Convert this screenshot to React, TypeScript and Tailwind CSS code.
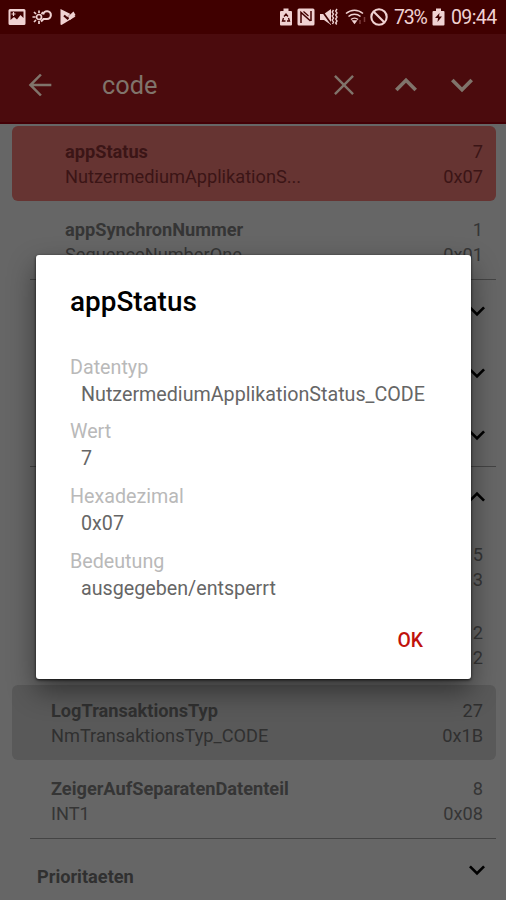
import { clsx } from "clsx";

interface Entry {
  name: string;
  type: string;
  value: string;
  hex: string;
  tone?: "match" | "current";
  nested?: boolean;
}

const TOP_ENTRIES: Entry[] = [
  { name: "appStatus", type: "NutzermediumApplikationS...", value: "7", hex: "0x07", tone: "current", nested: true },
  { name: "appSynchronNummer", type: "SequenceNumberOne", value: "1", hex: "0x01", nested: true },
];

const LOG_ENTRIES: Entry[] = [
  { name: "", type: "", value: "5", hex: "3" },
  { name: "", type: "", value: "2", hex: "2" },
  { name: "LogTransaktionsTyp", type: "NmTransaktionsTyp_CODE", value: "27", hex: "0x1B", tone: "match" },
  { name: "ZeigerAufSeparatenDatenteil", type: "INT1", value: "8", hex: "0x08" },
];

const DETAILS = [
  { label: "Datentyp", value: "NutzermediumApplikationStatus_CODE" },
  { label: "Wert", value: "7" },
  { label: "Hexadezimal", value: "0x07" },
  { label: "Bedeutung", value: "ausgegeben/entsperrt" },
];

const ICON_PATHS = {
  back: "M20 11.100H7.400l5.900-5.900L12 4l-8 8 8 8 1.300-1.200-5.900-5.900H20z",
  close: "M19 6.200 17.800 5 12 10.800 6.200 5 5 6.200 10.800 12 5 17.800 6.200 19 12 13.200 17.800 19 19 17.800 13.200 12z",
  up: "M7.410 15.410 12 10.830l4.590 4.580L18 14l-6-6-6 6z",
  down: "M7.410 8.590 12 13.170l4.590-4.580L18 10l-6 6-6-6z",
};

function Icon({ name, size, className }: { name: keyof typeof ICON_PATHS; size: number; className?: string }) {
  return (
    <svg width={size} height={size} viewBox="0 0 24 24" fill="currentColor" className={clsx("shrink-0", className)}>
      <path d={ICON_PATHS[name]} />
    </svg>
  );
}

function StatusBar() {
  return (
    <div className="flex h-[34px] items-center bg-[#400000] pr-[8px] pl-[8px] text-[#f0d2d2]">
      <svg width="18" height="18" viewBox="0 0 18 18" fill="currentColor">
        <path fillRule="evenodd" d="M2 1h14a1.500 1.500 0 0 1 1.500 1.500v13a1.500 1.500 0 0 1-1.500 1.500H2a1.500 1.500 0 0 1-1.500-1.500v-13A1.500 1.500 0 0 1 2 1ZM2.500 3.500v8.500l3.500-3 3 2.500 3.500-4.500 3 3V3.500Z" />
        <path d="M5.500 4v4M3.500 6h4" stroke="currentColor" strokeWidth="1.200" />
      </svg>
      <svg className="ml-[6px]" width="21" height="18" viewBox="0 0 21 18" fill="none" stroke="currentColor" strokeWidth="1.700">
        <circle cx="7" cy="9" r="2.500" />
        <path d="M7 2.500v2.500M7 13v3M.5 9h3M2 4l2 2M2 14l2-2M11 4l-1.500 2" />
        <path d="M9 13.500 11.500 11h3.500a3.900 3.900 0 1 0-3.900-4.500" strokeWidth="2.100" />
      </svg>
      <svg className="ml-[6px]" width="18" height="18" viewBox="0 0 18 18">
        <path d="M1.500 1 16.500 8.500 2.500 17l-1-.5Z" fill="currentColor" />
        <path d="M5 7.500 8.500 10.500 16 2.500" fill="none" stroke="#400000" strokeWidth="2.200" />
        <path d="M9 8.500 14.500 3.500 16.500 7 11 12" fill="currentColor" />
      </svg>

      <div className="ml-auto flex items-center">
        <svg width="12" height="18" viewBox="0 0 12 18">
          <path d="M3.500.5h5V3H11a1 1 0 0 1 1 1v12.500a1 1 0 0 1-1 1H1a1 1 0 0 1-1-1V4a1 1 0 0 1 1-1h2.500Z" fill="currentColor" />
          <path d="M4 8.500 6 6l2 2.500M3.500 10 2.500 13H5.500M8.500 10l1 3H7" fill="none" stroke="#400000" strokeWidth="1.300" />
        </svg>
        <svg className="ml-[5px]" width="18" height="18" viewBox="0 0 18 18">
          <rect x=".5" width="17" height="17" y=".5" rx="1.500" fill="currentColor" />
          <path d="M4 15V4.500L13.500 13M14 3v10" fill="none" stroke="#400000" strokeWidth="1.500" />
          <path d="M6.500 3.500 11.500 8" fill="none" stroke="#400000" strokeWidth="1.200" />
        </svg>
        <svg className="ml-[5px]" width="18" height="18" viewBox="0 0 18 18" fill="currentColor">
          <path d="M0 6h4l7-5v16l-7-5H0Z" />
          <path d="M1 1.500l10 14" stroke="#400000" strokeWidth="1.700" />
          <path d="M13.500 2l-1.300 2 1.300 2-1.300 2 1.300 2-1.300 2 1.300 2-1 2M17 1l-1.300 2L17 5l-1.300 2L17 9l-1.300 2 1.300 2-1.300 2 1 1.500" fill="none" stroke="currentColor" strokeWidth="1.400" />
        </svg>
        <svg className="ml-[7px]" width="22" height="18" viewBox="0 0 22 18" fill="none" stroke="currentColor" strokeWidth="1.500">
          <path d="M1 5.500c5-4.500 12-4.500 17 0M3.500 8.500c3.500-3 8.500-3 12 0M6 11.500c2-1.800 5-1.800 7 0" />
          <path d="M8 13h3l-1.500 2Z" fill="currentColor" />
          <path d="M15 12v4M19.500 9v5" stroke="#7a3a3a" />
        </svg>
        <svg className="ml-[3px]" width="18" height="18" viewBox="0 0 18 18" fill="none" stroke="currentColor" strokeWidth="2.100">
          <circle cx="9" cy="9" r="7.700" />
          <path d="M3.500 3.500l11 11" />
        </svg>
        <span className="ml-[6px] w-[33px] pt-px text-[19.500px] leading-none tracking-[-1.200px]">73%</span>
        <svg className="ml-[5px]" width="13" height="18" viewBox="0 0 12 18">
          <path d="M3.500.5h5V3H11a1 1 0 0 1 1 1v12.500a1 1 0 0 1-1 1H1a1 1 0 0 1-1-1V4a1 1 0 0 1 1-1h2.500Z" fill="currentColor" />
          <path d="M7 5 2.500 10H5.500l-.5 4 4.500-5.500h-3Z" fill="#400000" />
        </svg>
        <span className="ml-[6px] w-[47px] pt-px text-[19.500px] leading-none tracking-[-0.600px]">09:44</span>
      </div>
    </div>
  );
}

function SearchBar() {
  return (
    <header className="flex h-[90px] items-center border-b-2 border-[#430006] bg-[#4b0b0d] pt-[13px] pr-[22px] pl-[23px] text-[#80746b]">
      <Icon name="back" size={34} />
      <span className="ml-[45px] pt-[3px] text-[25.300px]">code</span>
      <div className="ml-auto flex items-center">
        <Icon name="close" size={34} className="mr-[23px]" />
        <Icon name="up" size={44} className="mr-[12px]" />
        <Icon name="down" size={44} />
      </div>
    </header>
  );
}

function EntryRow({ entry }: { entry: Entry }) {
  return (
    <div
      className={clsx(
        "mr-[10px] mb-[3px] ml-[12px] flex h-[75px] shrink-0 justify-between rounded-[6px] pt-[12.500px] pr-[13px] text-[18.200px] leading-[25px]",
        entry.nested ? "pl-[53px]" : "pl-[39px]",
        entry.tone === "current" && "bg-[#663432] text-[#3b1516]",
        entry.tone === "match" && "bg-[#595959] text-[#303030]",
        !entry.tone && "text-[#353535]",
      )}
    >
      <div>
        <p className="font-bold">{entry.name}</p>
        <p>{entry.type}</p>
      </div>
      <div className="text-right">
        <p>{entry.value}</p>
        <p>{entry.hex}</p>
      </div>
    </div>
  );
}

function GroupRow({ title, open }: { title?: string; open?: boolean }) {
  return (
    <div className="flex h-[62px] shrink-0 items-center justify-between pr-[13px] pl-[37px]">
      <span className="pt-[14px] text-[18.200px] font-bold text-[#303030]">{title}</span>
      <Icon name={open ? "up" : "down"} size={32} className={clsx("text-black", open && "-mt-[3px]")} />
    </div>
  );
}

function Divider() {
  return <div className="mr-[10px] ml-[30px] h-px shrink-0 bg-[#444444]" />;
}

function DetailDialog() {
  return (
    <div
      role="dialog"
      className="absolute top-[255px] left-[36px] flex h-[424px] w-[435px] flex-col rounded-[3px] bg-white px-[34px] shadow-[0_12px_28px_rgba(0,0,0,0.45),0_1px_3px_rgba(0,0,0,0.8)]"
    >
      <h2 className="mt-[29px] text-[27.900px] leading-[36px] font-medium text-black">appStatus</h2>
      <dl className="mt-[33.800px] text-[19.700px]">
        {DETAILS.map((detail) => (
          <div key={detail.label} className="h-[64.700px] leading-[27px]">
            <dt className="text-[#b9b9b9]">{detail.label}</dt>
            <dd className="pl-[11px] text-[#666666]">{detail.value}</dd>
          </div>
        ))}
      </dl>
      <button className="mt-[16px] mr-[14px] self-end text-[19.300px] leading-[24px] font-medium text-[#c0120c]">OK</button>
    </div>
  );
}

export default function App() {
  return (
    <div className="relative flex h-[900px] w-[506px] flex-col overflow-hidden bg-[#666666] font-[Roboto,sans-serif]">
      <StatusBar />
      <SearchBar />
      <main className="flex flex-1 flex-col overflow-hidden pt-[2px]">
        {TOP_ENTRIES.map((entry) => (
          <EntryRow key={entry.name} entry={entry} />
        ))}
        <div className="-mt-[3px]" />
        <Divider />
        <GroupRow />
        <GroupRow />
        <GroupRow />
        <Divider />
        <GroupRow open />
        <div className="flex h-[309px] shrink-0 flex-col">
          {LOG_ENTRIES.map((entry, i) => (
            <EntryRow key={i} entry={entry} />
          ))}
        </div>
        <Divider />
        <GroupRow title="Prioritaeten" />
      </main>
      <DetailDialog />
    </div>
  );
}
